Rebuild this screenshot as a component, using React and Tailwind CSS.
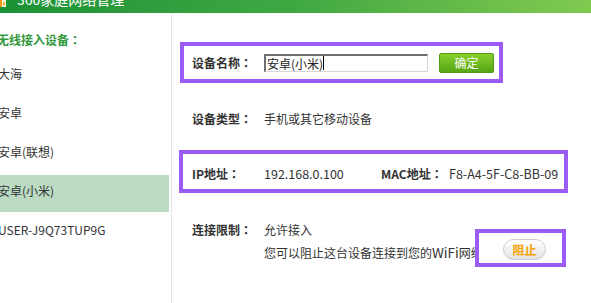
function Colon() {
  return (
    <span style={{ fontFamily: '"Noto Sans CJK JP", "Noto Sans CJK TC", sans-serif' }}>：</span>
  );
}

export default function App() {
  const items = ["大海", "安卓", "安卓(联想)", "安卓(小米)", "USER-J9Q73TUP9G"];
  const font = { fontFamily: '"Noto Sans CJK SC", "Noto Sans", sans-serif' };
  return (
    <div
      className="relative w-[591px] h-[303px] overflow-hidden bg-white text-[12px] text-[#333]"
      style={font}
    >
      {/* header */}
      <div className="h-[13px] overflow-hidden bg-gradient-to-r from-[#1a9236] via-[#3fa843] to-[#80ca4f] flex">
        <svg width="8" height="13" viewBox="0 0 8 13" className="shrink-0">
          <rect x="0" y="0" width="6" height="7" fill="#f6f0d8" />
          <rect x="0" y="0" width="2" height="7" fill="#f29a1a" />
          <rect x="3" y="2" width="2" height="3" fill="#f2b23a" />
        </svg>
        <div className="ml-[9px] -mt-[9px] text-[14px] leading-[16px] text-white whitespace-nowrap">
          360家庭网络管理
        </div>
      </div>

      <div className="flex h-[290px]">
        {/* left */}
        <div className="w-[172px] shrink-0 border-r border-[#e3e3e3] pr-[2px]">
          <div className="h-[45px] pt-[18px]">
            <div className="-ml-[3px] leading-[18px] font-bold text-[#34983d] whitespace-nowrap">
              无线接入设备<Colon />
            </div>
          </div>
          <div className="flex flex-col gap-[2px]">
            {items.map((t, i) => (
              <div
                key={t}
                className={
                  "h-[37px] flex items-center pb-[5px] " +
                  (i === 3 ? "bg-[#bbdbc3]" : "")
                }
              >
                <span className="-ml-[2px] whitespace-nowrap">{t}</span>
              </div>
            ))}
          </div>
        </div>

        {/* right */}
        <div className="flex-1 flex flex-col">
          {/* name row */}
          <div className="mt-[29px] ml-[8px] w-[323px] h-[41px] border-4 border-[#9b5cf6] flex items-center pl-[8px]">
            <div className="w-[72px] font-bold whitespace-nowrap">设备名称<Colon /></div>
            <div className="w-[164px] h-[18px] border-t-2 border-l-2 border-b border-r border-t-[#6f6f6f] border-l-[#6f6f6f] border-b-[#d6d6d6] border-r-[#d6d6d6] flex items-center pl-px leading-[15px] text-[#222]">
              <span>安卓(小米)</span>
              <span className="inline-block w-px h-[14px] bg-black" />
            </div>
            <div className="ml-[11px] w-[55px] h-[20px] rounded-[2px] border border-[#4f9b12] bg-gradient-to-b from-[#86cf2c] to-[#58a614] text-white flex items-center justify-center leading-[16px]">
              确定
            </div>
          </div>

          {/* type row */}
          <div className="h-[67px] pt-[27px] pl-[20px] flex leading-[18px]">
            <div className="w-[72px] font-bold whitespace-nowrap">设备类型<Colon /></div>
            <div>手机或其它移动设备</div>
          </div>

          {/* ip row */}
          <div className="ml-[7px] w-[389px] h-[43px] border-4 border-[#9b5cf6] pl-[9px] pt-[11px] flex leading-[18px] whitespace-nowrap">
            <div className="w-[72px] font-bold">IP地址<Colon /></div>
            <div className="w-[117px] text-[12.5px]">192.168.0.100</div>
            <div className="w-[68px] font-bold">MAC地址<Colon /></div>
            <div className="text-[12.5px]">F8-A4-5F-C8-BB-09</div>
          </div>

          {/* limit row */}
          <div className="mt-[25px] pl-[20px] flex leading-[23px] whitespace-nowrap">
            <div className="w-[72px] font-bold">连接限制<Colon /></div>
            <div className="flex flex-col">
              <div>允许接入</div>
              <div>
                您可以阻止这台设备连接到您的<span className="text-[13.5px]">WiFi</span>网络
              </div>
            </div>
          </div>
        </div>
      </div>

      {/* annotation box over block button */}
      <div className="absolute left-[475px] top-[229px] w-[91px] h-[38px] border-4 border-[#9b5cf6] bg-white pl-[24px] pt-[6px]">
        <div className="w-[43px] h-[21px] rounded-full border border-[#cdcdcd] bg-gradient-to-b from-[#ffffff] to-[#e2e2e2] shadow-[inset_0_1px_0_#fff] flex items-center justify-center font-bold text-[#f5a300] leading-[16px]">
          阻止
        </div>
      </div>
    </div>
  );
}
